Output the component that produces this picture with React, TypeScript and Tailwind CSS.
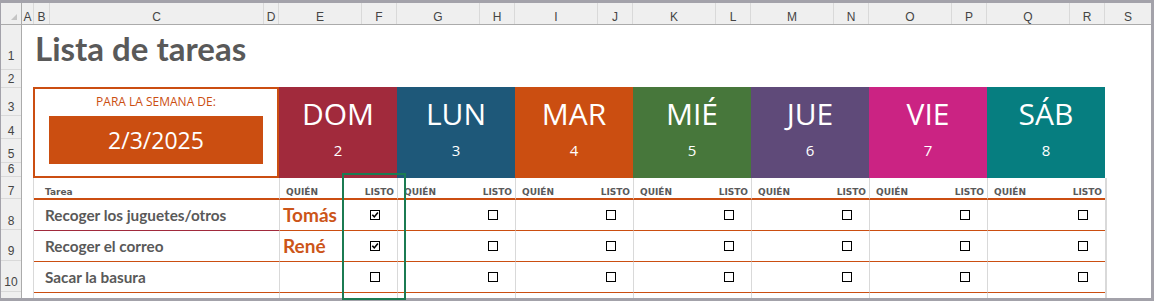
import React from "react"

type Day = { name: string; num: number; bg: string }

const DAYS: Day[] = [
  { name: "DOM", num: 2, bg: "bg-[#a12a3c]" },
  { name: "LUN", num: 3, bg: "bg-[#1e5879]" },
  { name: "MAR", num: 4, bg: "bg-[#cb4e11]" },
  { name: "MIÉ", num: 5, bg: "bg-[#47773b]" },
  { name: "JUE", num: 6, bg: "bg-[#5f4a79]" },
  { name: "VIE", num: 7, bg: "bg-[#cb2383]" },
  { name: "SÁB", num: 8, bg: "bg-[#067e80]" },
]

const COLS: [string, string][] = [
  ["A", "w-[12px]"], ["B", "w-[16px]"], ["C", "w-[214px]"], ["D", "w-[15px]"],
  ["E", "w-[83px]"], ["F", "w-[35px]"], ["G", "w-[83px]"], ["H", "w-[35px]"],
  ["I", "w-[83px]"], ["J", "w-[35px]"], ["K", "w-[83px]"], ["L", "w-[35px]"],
  ["M", "w-[83px]"], ["N", "w-[35px]"], ["O", "w-[83px]"], ["P", "w-[35px]"],
  ["Q", "w-[83px]"], ["R", "w-[35px]"],
]

// row number, height + label offset
const ROWS: [string, string][] = [
  ["1", "h-[45px] pb-[7px]"],
  ["2", "h-[18px] pb-[2px]"],
  ["3", "h-[28px] pb-[2px]"],
  ["4", "h-[23px] pb-[1px]"],
  ["5", "h-[24px] pb-[2px]"],
  ["6", "h-[14px] pb-[1px]"],
  ["7", "h-[22px] pb-[1px]"],
  ["8", "h-[31px] pb-[2px]"],
  ["9", "h-[31px] pb-[3px]"],
  ["10", "h-[31px] pb-[3px]"],
]

const TASKS = [
  { label: "Recoger los juguetes/otros", who: "Tomás", done: true, line: "border-[#a12a3c]" },
  { label: "Recoger el correo", who: "René", done: true, line: "border-[#cb4e11]" },
  { label: "Sacar la basura", who: "", done: false, line: "border-[#cb4e11]" },
]

function Box({ checked }: { checked: boolean }) {
  return (
    <svg width="10" height="10" viewBox="0 0 10 10" className="block">
      <rect x="0.5" y="0.5" width="9" height="9" fill="white" stroke="black" strokeWidth="1" />
      {checked && (
        <path d="M2.3 4.8 L4.3 6.9 L7.9 2.6" fill="none" stroke="black" strokeWidth="1.6" />
      )}
    </svg>
  )
}

const label = "font-['DejaVu_Sans',sans-serif] font-bold text-[9px] leading-[11px] text-[#595959]"

export default function App() {
  return (
    <div className="relative w-[1154px] h-[301px] bg-white border-t-[3px] border-l border-r-[3px] border-b-[3px] border-[#a3a2aa] flex flex-col">
      {/* Column letters */}
      <div className="flex h-[22px] shrink-0 bg-[#efefef] border-b border-[#ababab] font-['Liberation_Sans',sans-serif] text-[12px] leading-[12px] text-[#444]">
        <div className="w-[21px] shrink-0 border-r border-[#ababab] flex items-end justify-end pr-[4px] pb-[4px]">
          <svg width="6" height="6" viewBox="0 0 6 6"><polygon points="6,0 6,6 0,6" fill="#c4c4c4" /></svg>
        </div>
        {COLS.map(([l, w]) => (
          <div key={l} className={`${w} shrink-0 border-r border-[#d9d9d9] flex items-end justify-center pb-[1px]`}>
            {l}
          </div>
        ))}
        <div className="flex-1 flex items-end justify-center pb-[1px]">S</div>
      </div>

      <div className="flex flex-1 min-h-0">
        {/* Row numbers */}
        <div className="w-[21px] shrink-0 bg-[#efefef] border-r border-[#ababab] flex flex-col font-['Liberation_Sans',sans-serif] text-[12px] leading-[12px] text-[#444]">
          {ROWS.map(([n, cls]) => (
            <div key={n} className={`${cls} shrink-0 border-b border-[#d9d9d9] flex items-end justify-center`}>
              {n}
            </div>
          ))}
          <div className="flex-1" />
        </div>

        {/* Sheet */}
        <div className="flex-1 flex flex-col min-w-0">
          <div className="h-[45px] shrink-0 pl-[13px] pt-[3px]">
            <h1 className="font-['Lato',sans-serif] font-bold text-[33px] leading-[40px] text-[#595959]">
              Lista de tareas
            </h1>
          </div>
          <div className="h-[17px] shrink-0" />

          {/* Week band */}
          <div className="h-[91px] shrink-0 ml-[11px] flex font-['Open_Sans',sans-serif]">
            <div className="w-[246px] border-2 border-[#cb4e11] flex flex-col items-center pt-[5px]">
              <p className="text-[12px] leading-[16px] text-[#cb4e11]">PARA LA SEMANA DE:</p>
              <div className="mt-[6px] w-[214px] h-[48px] bg-[#cb4e11] flex items-center justify-center text-white text-[23px] leading-[23px]">
                2/3/2025
              </div>
            </div>
            {DAYS.map((d) => (
              <div key={d.name} className={`w-[118px] ${d.bg} flex flex-col items-center pt-[7px] text-white`}>
                <span className="text-[30px] leading-[40px]">{d.name}</span>
                <span className="mt-[6px] text-[15px] leading-[20px]">{d.num}</span>
              </div>
            ))}
          </div>

          {/* Table */}
          <div className="ml-[11px] w-[1074px] flex-1 flex flex-col border-l border-r-2 border-[#d9d9d9]">
            <div className="flex h-[22px] shrink-0">
              <div className={`w-[245px] border-b-2 border-[#cb4e11] flex items-end pl-[11px] ${label}`}>Tarea</div>
              {DAYS.map((d) => (
                <div key={d.name} className={`w-[118px] flex border-l border-l-[#d9d9d9] border-b-2 border-b-[#cb4e11] ${label}`}>
                  <div className="w-[82px] flex items-end pl-[6px]">QUIÉN</div>
                  <div className="w-[35px] flex items-end justify-end pr-[3px]">LISTO</div>
                </div>
              ))}
            </div>

            {TASKS.map((t) => (
              <div key={t.label} className="flex h-[31px] shrink-0">
                <div className={`w-[245px] border-b ${t.line} flex items-center pl-[11px] font-['Lato',sans-serif] font-bold text-[15.3px] text-[#595959]`}>
                  {t.label}
                </div>
                {DAYS.map((d, i) => (
                  <div key={d.name} className="w-[118px] flex border-l border-l-[#d9d9d9] border-b border-b-[#cb4e11]">
                    <div className="w-[82px] flex items-center pl-[3px] font-['Lato',sans-serif] font-bold text-[19px] text-[#cc5519]">
                      {i === 0 ? t.who : ""}
                    </div>
                    <div className="w-[35px] flex items-center pl-[8px]">
                      <Box checked={i === 0 && t.done} />
                    </div>
                  </div>
                ))}
              </div>
            ))}

            <div className="flex flex-1">
              <div className="w-[245px]" />
              {DAYS.map((d) => (
                <div key={d.name} className="w-[118px] border-l border-[#d9d9d9]" />
              ))}
            </div>
          </div>
        </div>
      </div>

      {/* Selected range */}
      <div className="absolute left-[341px] top-[170px] w-[64px] h-[127px] border-2 border-[#1b7b52]" />
    </div>
  )
}
